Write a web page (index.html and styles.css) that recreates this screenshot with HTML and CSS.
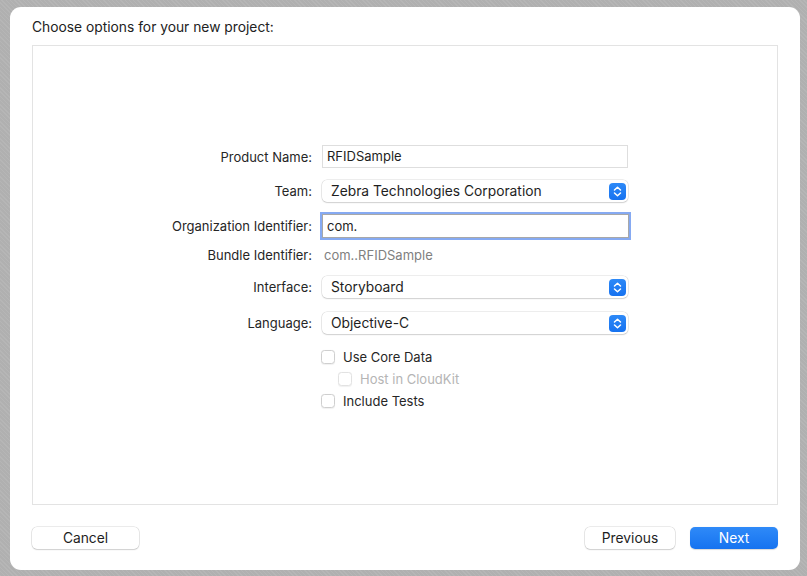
FILE: index.html
```html
<!DOCTYPE html>
<html>
<head>
<meta charset="utf-8">
<link rel="stylesheet" href="styles.css">
</head>
<body>
<div class="window">
  <div class="title">Choose options for your new project:</div>
  <div class="panel">
    <div class="form">
      <div class="row r-name">
        <div class="label">Product Name:</div>
        <div class="field textfield">RFIDSample</div>
      </div>
      <div class="row r-team">
        <div class="label">Team:</div>
        <div class="field popup"><span>Zebra Technologies Corporation</span>
          <span class="arrows"><svg width="17" height="17" viewBox="0 0 17 17"><path d="M5.5 7 L8.5 4.2 L11.5 7 M5.5 10 L8.5 12.8 L11.5 10" fill="none" stroke="#fff" stroke-width="1.5" stroke-linecap="round" stroke-linejoin="round"/></svg></span>
        </div>
      </div>
      <div class="row r-org">
        <div class="label">Organization Identifier:</div>
        <div class="field textfield focused">com.</div>
      </div>
      <div class="row r-bundle">
        <div class="label">Bundle Identifier:</div>
        <div class="field plain">com..RFIDSample</div>
      </div>
      <div class="row r-iface">
        <div class="label">Interface:</div>
        <div class="field popup"><span>Storyboard</span>
          <span class="arrows"><svg width="17" height="17" viewBox="0 0 17 17"><path d="M5.5 7 L8.5 4.2 L11.5 7 M5.5 10 L8.5 12.8 L11.5 10" fill="none" stroke="#fff" stroke-width="1.5" stroke-linecap="round" stroke-linejoin="round"/></svg></span>
        </div>
      </div>
      <div class="row r-lang">
        <div class="label">Language:</div>
        <div class="field popup"><span>Objective-C</span>
          <span class="arrows"><svg width="17" height="17" viewBox="0 0 17 17"><path d="M5.5 7 L8.5 4.2 L11.5 7 M5.5 10 L8.5 12.8 L11.5 10" fill="none" stroke="#fff" stroke-width="1.5" stroke-linecap="round" stroke-linejoin="round"/></svg></span>
        </div>
      </div>
      <div class="row check first">
        <div class="label"></div>
        <div class="field"><span class="box"></span><span>Use Core Data</span></div>
      </div>
      <div class="row check sub">
        <div class="label"></div>
        <div class="field disabled"><span class="box"></span><span>Host in CloudKit</span></div>
      </div>
      <div class="row check">
        <div class="label"></div>
        <div class="field"><span class="box"></span><span>Include Tests</span></div>
      </div>
    </div>
  </div>
  <div class="buttons">
    <button class="btn cancel">Cancel</button>
    <div class="spacer"></div>
    <button class="btn prev">Previous</button>
    <button class="btn next">Next</button>
  </div>
</div>
</body>
</html>
```
FILE: styles.css
```css
html, body {
  margin: 0;
  padding: 0;
}
body {
  width: 807px;
  height: 576px;
  overflow: hidden;
  background: #b0b0b0;
  background-image: repeating-linear-gradient(45deg, rgba(255,255,255,0.08) 0 1px, transparent 1px 3px);
  font-family: Inter, "Liberation Sans", sans-serif;
  font-size: 13px;
  color: #262626;
}
.window {
  margin: 7px 0 0 10px;
  width: 790px;
  height: 563px;
  background: #ffffff;
  border-radius: 11px;
  box-sizing: border-box;
  padding: 0 22px 0 22px;
  display: flex;
  flex-direction: column;
}
.title {
  height: 38px;
  line-height: 40px;
  font-size: 13.8px;
  color: #222;
}
.panel {
  height: 460px;
  border: 1px solid #e3e3e3;
  box-sizing: border-box;
  padding-top: 99px;
  background: #fff;
}
.form {
  display: flex;
  flex-direction: column;
}
.row {
  display: flex;
  align-items: center;
}
.label {
  width: 279px;
  text-align: right;
  padding-right: 10px;
  flex: none;
  color: #262626;
}
.field {
  width: 306px;
  box-sizing: border-box;
  flex: none;
}
.r-name { height: 23px; }
.r-team { height: 22px; margin-top: 12px; }
.r-org { height: 24px; margin-top: 12px; }
.r-bundle { height: 18px; margin-top: 8px; }
.r-iface { height: 22px; margin-top: 12px; }
.r-lang { height: 22px; margin-top: 14px; }
.check { height: 22px; }
.check.first { margin-top: 12px; }

.textfield {
  height: 23px;
  border: 1px solid #dedede;
  padding-left: 4px;
  line-height: 21px;
  background: #fff;
  color: #1e1e1e;
}
.textfield.focused {
  height: 24px;
  border: 1px solid #a8a8a8;
  box-shadow: 0 0 0 2px #86aaf2;
  line-height: 22px;
  width: 307px;
}
.plain {
  color: #808080;
  padding-left: 2px;
}
.popup {
  height: 22px;
  border-radius: 5px;
  background: #fff;
  box-shadow: 0 0 0 0.5px rgba(0,0,0,0.14), 0 1px 1.5px rgba(0,0,0,0.12);
  display: flex;
  align-items: center;
  justify-content: space-between;
  padding: 0 2px 0 9px;
  font-size: 13.8px;
  color: #1e1e1e;
}
.arrows {
  width: 17px;
  height: 17px;
  border-radius: 4px;
  background: linear-gradient(#2d89f7, #1672f0);
  display: flex;
}
.check .field {
  display: flex;
  align-items: center;
  padding-left: 0;
  margin-left: -1px;
  gap: 8px;
  color: #262626;
}
.box {
  width: 14px;
  height: 14px;
  box-sizing: border-box;
  border: 1px solid #cfcfcf;
  border-radius: 3.5px;
  background: #fff;
  box-shadow: 0 0.5px 1px rgba(0,0,0,0.06);
}
.sub .field {
  padding-left: 17px;
}
.disabled {
  color: #b5b5b5 !important;
}
.disabled .box {
  border-color: #e2e2e2;
}
.buttons {
  display: flex;
  margin-top: 22px;
  align-items: center;
  gap: 15px;
}
.spacer { flex: 1; }
.btn {
  height: 22px;
  border-radius: 5px;
  font-family: Inter, "Liberation Sans", sans-serif;
  font-size: 13.8px;
  border: none;
  padding: 0;
  background: #fff;
  color: #1e1e1e;
  box-shadow: 0 0 0 0.5px rgba(0,0,0,0.16), 0 1px 1.5px rgba(0,0,0,0.12);
}
.cancel { width: 107px; }
.prev { width: 90px; }
.next {
  width: 88px;
  background: linear-gradient(#2f8af8, #1673f0);
  color: #fff;
  box-shadow: 0 0.5px 1px rgba(0,0,0,0.15);
}
```
